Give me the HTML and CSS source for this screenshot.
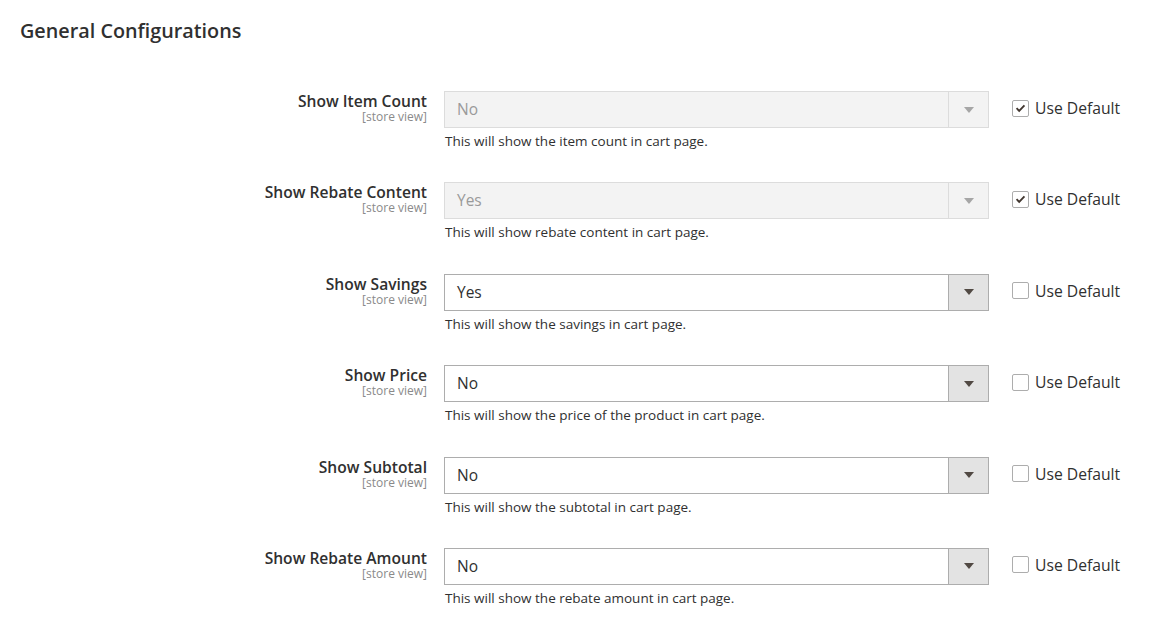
FILE: index.html
```html
<!DOCTYPE html>
<html lang="en">
<head>
<meta charset="utf-8">
<title>General Configurations</title>
<link rel="stylesheet" href="styles.css">
</head>
<body>
<div class="page">
  <h2 class="title">General Configurations</h2>
  <div class="fields">
    <div class="row">
      <div class="label"><span class="name">Show Item Count</span><span class="scope">[store view]</span></div>
      <div class="control">
        <div class="select disabled"><span class="value">No</span><span class="arrow"></span></div>
        <div class="note">This will show the item count in cart page.</div>
      </div>
      <label class="default"><span class="box checked"><svg viewBox="0 0 16 16" width="16" height="16"><path d="M3.8 8.2 L6.6 11 L12.2 5.2" fill="none" stroke="#41362f" stroke-width="2"/></svg></span>Use Default</label>
    </div>
    <div class="row">
      <div class="label"><span class="name">Show Rebate Content</span><span class="scope">[store view]</span></div>
      <div class="control">
        <div class="select disabled"><span class="value">Yes</span><span class="arrow"></span></div>
        <div class="note">This will show rebate content in cart page.</div>
      </div>
      <label class="default"><span class="box checked"><svg viewBox="0 0 16 16" width="16" height="16"><path d="M3.8 8.2 L6.6 11 L12.2 5.2" fill="none" stroke="#41362f" stroke-width="2"/></svg></span>Use Default</label>
    </div>
    <div class="row">
      <div class="label"><span class="name">Show Savings</span><span class="scope">[store view]</span></div>
      <div class="control">
        <div class="select"><span class="value">Yes</span><span class="arrow"></span></div>
        <div class="note">This will show the savings in cart page.</div>
      </div>
      <label class="default"><span class="box"></span>Use Default</label>
    </div>
    <div class="row">
      <div class="label"><span class="name">Show Price</span><span class="scope">[store view]</span></div>
      <div class="control">
        <div class="select"><span class="value">No</span><span class="arrow"></span></div>
        <div class="note">This will show the price of the product in cart page.</div>
      </div>
      <label class="default"><span class="box"></span>Use Default</label>
    </div>
    <div class="row">
      <div class="label"><span class="name">Show Subtotal</span><span class="scope">[store view]</span></div>
      <div class="control">
        <div class="select"><span class="value">No</span><span class="arrow"></span></div>
        <div class="note">This will show the subtotal in cart page.</div>
      </div>
      <label class="default"><span class="box"></span>Use Default</label>
    </div>
    <div class="row">
      <div class="label"><span class="name">Show Rebate Amount</span><span class="scope">[store view]</span></div>
      <div class="control">
        <div class="select"><span class="value">No</span><span class="arrow"></span></div>
        <div class="note">This will show the rebate amount in cart page.</div>
      </div>
      <label class="default"><span class="box"></span>Use Default</label>
    </div>
  </div>
</div>
</body>
</html>
```

FILE: styles.css
```css
* { box-sizing: border-box; }
html, body { margin: 0; padding: 0; background: #fff; }
body {
  font-family: "Open Sans", "Noto Sans", sans-serif;
  color: #303030;
}
.page { padding: 19px 20px 0 20px; }
.title {
  margin: 0;
  font-size: 19.8px;
  line-height: 24px;
  font-weight: 600;
  color: #303030;
}
.fields { margin-top: 48px; }
.row {
  display: grid;
  grid-template-columns: 407px 545px auto;
  column-gap: 17px;
  height: 91.4px;
  align-items: start;
}
.label {
  display: flex;
  flex-direction: column;
  align-items: flex-end;
  text-align: right;
}
.name {
  font-size: 15.6px;
  font-weight: 600;
  line-height: 20px;
  color: #303030;
}
.scope {
  font-size: 12px;
  line-height: 12px;
  color: #8a8a8a;
}
.select {
  display: flex;
  height: 37px;
  border: 1px solid #adadad;
  background: #fff;
}
.select .value {
  flex: 1;
  padding-left: 12px;
  font-size: 15.5px;
  line-height: 35px;
  color: #303030;
}
.select .arrow {
  width: 40px;
  border-left: 1px solid #adadad;
  background: #e3e3e3;
  display: flex;
  align-items: center;
  justify-content: center;
}
.select .arrow::after {
  content: "";
  border-left: 5px solid transparent;
  border-right: 5px solid transparent;
  border-top: 6px solid #514943;
}
.select.disabled { border-color: #dcdcdc; background: #f3f3f3; }
.select.disabled .value { color: #9a9a9a; }
.select.disabled .arrow { border-left-color: #dcdcdc; background: #f3f3f3; }
.select.disabled .arrow::after { border-top-color: #a6a6a6; }
.note {
  margin-top: 4px;
  padding-left: 1px;
  font-size: 13.5px;
  line-height: 18px;
  color: #303030;
}
.default {
  display: flex;
  align-items: center;
  gap: 6px;
  margin-left: 6px;
  height: 34px;
  font-size: 15.7px;
  color: #303030;
}
.box {
  width: 17px;
  height: 17px;
  border: 1px solid #adadad;
  border-radius: 2px;
  background: #fff;
  display: flex;
  align-items: center;
  justify-content: center;
}
.box svg { display: block; }
```
